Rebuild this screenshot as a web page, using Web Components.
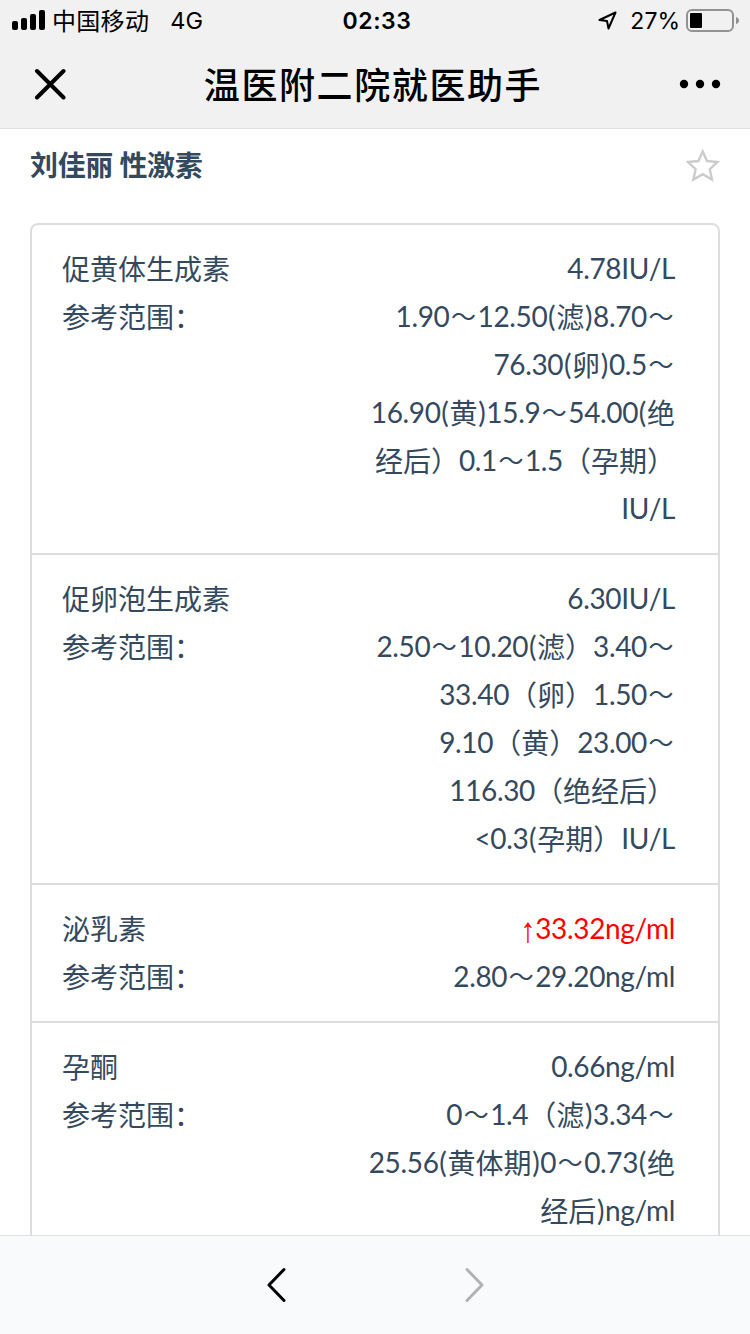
<!DOCTYPE html>
<html lang="zh-CN">
<head>
<meta charset="utf-8">
<title>温医附二院就医助手</title>
<style>
    html, body {
        margin: 0;
        height: 100%;
    }
    body {
        display: flex;
        flex-direction: column;
        overflow: hidden;
        background-color: white;
        font-family: Lato, "Noto Sans CJK SC", sans-serif;
    }
</style>
</head>
<body>
    <status-bar carrier="中国移动" network="4G" time="02:33" battery="27"></status-bar>
    <title-bar>温医附二院就医助手</title-bar>
    <report-view>
        <span slot="title">刘佳丽 性激素</span>
        <result-item name="促黄体生成素" value="4.78IU/L"
            range="1.90～12.50(滤)8.70～|76.30(卵)0.5～|16.90(黄)15.9～54.00(绝|经后）0.1～1.5（孕期）|IU/L"></result-item>
        <result-item name="促卵泡生成素" value="6.30IU/L"
            range="2.50～10.20(滤）3.40～|33.40（卵）1.50～|9.10（黄）23.00～|116.30（绝经后）|&lt;0.3(孕期）IU/L"></result-item>
        <result-item name="泌乳素" value="↑33.32ng/ml" range="2.80～29.20ng/ml" abnormal></result-item>
        <result-item name="孕酮" value="0.66ng/ml"
            range="0～1.4（滤)3.34～|25.56(黄体期)0～0.73(绝|经后)ng/ml"></result-item>
    </report-view>
    <nav-bar></nav-bar>

<script>
class StatusBar extends HTMLElement {
    constructor() {
        super()
        this.attachShadow({ mode: 'open' })
        this.shadowRoot.innerHTML = `
            <style>
                :host {
                    display: grid;
                    grid-template-columns: 1fr auto 1fr;
                    align-items: center;
                    flex: none;
                    height: 40px;
                    box-sizing: border-box;
                    padding: 0 10px 0 12px;
                    background-color: #f1f1f1;
                    color: black;
                    font: 24px/40px Inter, "Noto Sans CJK SC", sans-serif;
                }
                svg {
                    display: block;
                    flex: none;
                }
                .left, .right {
                    display: flex;
                    align-items: center;
                }
                .right {
                    justify-content: flex-end;
                }
                .carrier, .network, .time, .percent {
                    padding-top: 1px;
                    height: 39px;
                }
                .carrier {
                    padding-top: 2px;
                    height: 38px;
                    margin-left: 6px;
                    letter-spacing: 0.3px;
                }
                .network {
                    margin-left: 21px;
                    font-size: 23.5px;
                }
                .time {
                    margin-left: 2px;
                    font-weight: 600;
                    font-size: 23px;
                    letter-spacing: 0.6px;
                }
                .percent {
                    margin: 0 6px 0 13px;
                    font-size: 23px;
                }
                .battery {
                    margin-right: -4px;
                }
            </style>
            <div class="left">
                <svg width="34" height="20" viewBox="0 0 34 20">
                    <rect x="0" y="11" width="6" height="9" rx="2"/>
                    <rect x="9" y="8" width="6" height="12" rx="2"/>
                    <rect x="18" y="4" width="6" height="16" rx="2"/>
                    <rect x="27" y="0" width="6" height="20" rx="2"/>
                </svg>
                <span class="carrier"></span>
                <span class="network"></span>
            </div>
            <span class="time"></span>
            <div class="right">
                <svg width="20" height="20" viewBox="0 0 20 20" fill="none" stroke="black" stroke-width="2" stroke-linejoin="round">
                    <path d="M18.500 2.500L2.500 10L10 11L11.500 18.500Z"/>
                </svg>
                <span class="percent"></span>
                <svg class="battery" width="58" height="24" viewBox="0 0 58 24">
                    <rect x="1" y="2" width="46" height="21" rx="5" fill="none" stroke="#929292" stroke-width="2"/>
                    <rect class="level" x="4" y="5" height="15" rx="1"/>
                    <path d="M50 9Q53 10 53 12.5Q53 15 50 16Z" fill="#929292"/>
                </svg>
            </div>
        `
    }
    connectedCallback() {
        const root = this.shadowRoot
        root.querySelector('.carrier').textContent = this.getAttribute('carrier')
        root.querySelector('.network').textContent = this.getAttribute('network')
        root.querySelector('.time').textContent = this.getAttribute('time')
        const battery = Number(this.getAttribute('battery'))
        root.querySelector('.percent').textContent = `${battery}%`
        root.querySelector('.level').setAttribute('width', Math.round(battery * 0.44))
    }
}

class TitleBar extends HTMLElement {
    constructor() {
        super()
        this.attachShadow({ mode: 'open' })
        this.shadowRoot.innerHTML = `
            <style>
                :host {
                    display: flex;
                    align-items: center;
                    justify-content: space-between;
                    flex: none;
                    height: 89px;
                    box-sizing: border-box;
                    padding: 0 29px 0 34px;
                    border-bottom: 1px solid #e0e0e0;
                    background-color: #f1f1f1;
                    color: black;
                }
                h1 {
                    margin: 0;
                    padding-top: 2px;
                    font-size: 36px;
                    line-height: 86px;
                    font-weight: 500;
                    letter-spacing: 1.6px;
                }
                svg {
                    display: block;
                }
            </style>
            <svg width="33" height="32" viewBox="0 0 33 32" fill="none" stroke="black" stroke-width="4" stroke-linecap="round">
                <path d="M3 3L29.5 29.5M29.5 3L3 29.5"/>
            </svg>
            <h1><slot></slot></h1>
            <svg width="42" height="10" viewBox="0 0 42 10">
                <circle cx="5" cy="5" r="4.2"/>
                <circle cx="21" cy="5" r="4.2"/>
                <circle cx="37" cy="5" r="4.2"/>
            </svg>
        `
    }
}

class ReportView extends HTMLElement {
    constructor() {
        super()
        this.attachShadow({ mode: 'open' })
        this.shadowRoot.innerHTML = `
            <style>
                :host {
                    display: block;
                    flex: 1;
                    min-height: 0;
                    overflow: hidden;
                    padding: 0 30px;
                    color: #34495e;
                }
                header {
                    display: flex;
                    align-items: center;
                    justify-content: space-between;
                    height: 72px;
                    margin-bottom: 22px;
                }
                h2 {
                    margin: 0;
                    font-size: 28px;
                    line-height: 48px;
                    font-weight: 700;
                    letter-spacing: -0.35px;
                }
                .card {
                    border: 2px solid #ddd;
                    border-radius: 8px;
                }
            </style>
            <header>
                <h2><slot name="title"></slot></h2>
                <svg width="34" height="34" viewBox="0 0 34 34" fill="none" stroke="#ccc" stroke-width="2.4">
                    <path d="M16.700 3.500L21 13L31.500 14L23.800 21.200L26 31.600L16.700 26.200L7.400 31.600L9.600 21.200L2 14L12.400 13Z"/>
                </svg>
            </header>
            <div class="card"><slot></slot></div>
        `
    }
}

class ResultItem extends HTMLElement {
    constructor() {
        super()
        this.attachShadow({ mode: 'open' })
        this.shadowRoot.innerHTML = `
            <style>
                :host {
                    display: block;
                    padding: 20px 43px 20px 30px;
                    border-bottom: 2px solid #ddd;
                    font-size: 28px;
                    line-height: 48px;
                }
                :host(:last-of-type) {
                    border-bottom: none;
                }
                .row {
                    display: flex;
                    justify-content: space-between;
                }
                .lines {
                    display: flex;
                    flex-direction: column;
                    align-items: flex-end;
                }
                .line, .value {
                    height: 48px;
                    white-space: nowrap;
                }
                .latin, .paren, .tilde, .arrow {
                    line-height: 1;
                }
                .latin {
                    letter-spacing: -0.35px;
                    vertical-align: 1px;
                }
                .paren {
                    padding: 0 0.7px;
                    vertical-align: 1px;
                }
                .tilde {
                    display: inline-block;
                    width: 28px;
                    text-align: center;
                    font-size: 25px;
                    vertical-align: 2px;
                }
                .arrow {
                    display: inline-block;
                    font-family: "Liberation Sans", sans-serif;
                    transform: scale(1.1, 1.25);
                }
                :host([abnormal]) .value {
                    color: red;
                }
            </style>
            <div class="row">
                <span class="name"></span>
                <span class="value"></span>
            </div>
            <div class="row">
                <span>参考范围：</span>
                <div class="lines"></div>
            </div>
        `
    }
    connectedCallback() {
        const root = this.shadowRoot
        root.querySelector('.name').textContent = this.getAttribute('name')
        this.appendRuns(root.querySelector('.value'), this.getAttribute('value'))
        const lines = root.querySelector('.lines')
        for (const text of this.getAttribute('range').split('|')) {
            const line = document.createElement('div')
            line.className = 'line'
            this.appendRuns(line, text)
            lines.appendChild(line)
        }
    }

    // latin text, brackets and signs are spaced differently from the chinese text
    appendRuns(parent, text) {
        for (const run of text.match(/[()]|～|↑|[\w.\/<]+|[^\w.\/<()～↑]+/g)) {
            const span = document.createElement('span')
            if (/[()]/.test(run))
                span.className = 'paren'
            else if (run == '～')
                span.className = 'tilde'
            else if (run == '↑')
                span.className = 'arrow'
            else if (/^[\w.\/<]/.test(run))
                span.className = 'latin'
            span.textContent = run
            parent.appendChild(span)
        }
    }
}

class NavBar extends HTMLElement {
    constructor() {
        super()
        this.attachShadow({ mode: 'open' })
        this.shadowRoot.innerHTML = `
            <style>
                :host {
                    display: flex;
                    align-items: center;
                    justify-content: center;
                    gap: 179px;
                    flex: none;
                    height: 99px;
                    box-sizing: border-box;
                    border-top: 1px solid #e0e1e2;
                    background-color: #f9fafc;
                }
                svg {
                    display: block;
                    fill: none;
                    stroke-width: 3;
                    stroke-linecap: round;
                    stroke-linejoin: round;
                }
            </style>
            <svg width="20" height="36" viewBox="0 0 20 36" stroke="black">
                <path d="M18 2.500L3 18L18 33.500"/>
            </svg>
            <svg width="20" height="36" viewBox="0 0 20 36" stroke="#b2b2b2">
                <path d="M2 2.500L17 18L2 33.500"/>
            </svg>
        `
    }
}

customElements.define('status-bar', StatusBar)
customElements.define('title-bar', TitleBar)
customElements.define('report-view', ReportView)
customElements.define('result-item', ResultItem)
customElements.define('nav-bar', NavBar)
</script>
</body>
</html>
